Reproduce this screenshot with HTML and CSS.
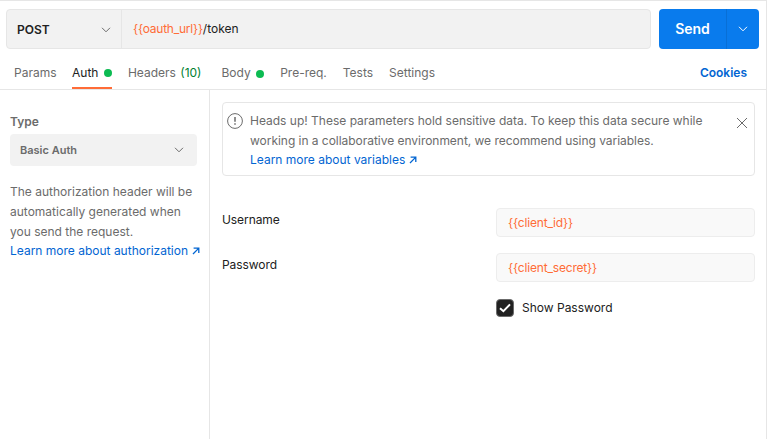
FILE: index.html
```html
<!DOCTYPE html>
<html lang="en">
<head>
<meta charset="utf-8">
<title>Request</title>
<link rel="stylesheet" href="styles.css">
</head>
<body>
<main class="panel">
  <div class="request">
    <div class="urlbar">
      <div class="method">POST
        <svg class="chev" width="10" height="6" viewBox="0 0 10 6"><path d="M1 .8 5 4.8 9 .8"/></svg>
      </div>
      <div class="url"><span class="var">{{oauth_url}}</span>/token</div>
    </div>
    <div class="send">
      <span class="send-label">Send</span>
      <span class="send-more"><svg class="chev" width="10" height="6" viewBox="0 0 10 6"><path d="M1 .8 5 4.8 9 .8"/></svg></span>
    </div>
  </div>
  <nav class="tabs">
    <a class="tab params">Params</a>
    <a class="tab auth active">Auth<i class="dot"></i></a>
    <a class="tab headers">Headers <span class="count">(10)</span></a>
    <a class="tab body">Body<i class="dot"></i></a>
    <a class="tab prereq">Pre-req.</a>
    <a class="tab tests">Tests</a>
    <a class="tab settings">Settings</a>
    <a class="cookies">Cookies</a>
  </nav>
  <div class="content">
    <aside class="side">
      <div class="type">Type</div>
      <div class="select">Basic Auth
        <svg class="chev" width="10" height="6" viewBox="0 0 10 6"><path d="M1 .8 5 4.8 9 .8"/></svg>
      </div>
      <p class="help">The authorization header will be<br>automatically generated when<br>you send the request.</p>
      <a class="link">Learn more about authorization<svg class="ext" width="8" height="8" viewBox="0 0 8 8"><path d="M1.6 1.2H6.8V6M6.6 1.4 1 7"/></svg></a>
    </aside>
    <section class="main">
      <div class="notice">
        <svg class="info" width="16" height="16" viewBox="0 0 16 16"><circle cx="8" cy="8" r="7.4"/><path d="M8 4v4.8M8 10.2v1.6"/></svg>
        <div class="notice-text">
          <p>Heads up! These parameters hold sensitive data. To keep this data secure while</p>
          <p class="second">working in a collaborative environment, we recommend using variables.</p>
          <a class="link">Learn more about variables<svg class="ext" width="8" height="8" viewBox="0 0 8 8"><path d="M1.6 1.2H6.8V6M6.6 1.4 1 7"/></svg></a>
        </div>
        <svg class="close" width="12" height="12" viewBox="0 0 12 12"><path d="M1 1l10 10M11 1 1 11"/></svg>
      </div>
      <div class="field"><span class="label">Username</span><div class="input">{{client_id}}</div></div>
      <div class="field"><span class="label">Password</span><div class="input">{{client_secret}}</div></div>
      <div class="check">
        <span class="box"><svg width="12" height="10" viewBox="0 0 12 10"><path d="M1 5.2 4.4 8.2 11 1.4"/></svg></span>
        Show Password
      </div>
    </section>
  </div>
</main>
</body>
</html>
```
FILE: styles.css
```css
* { box-sizing: border-box; }
body { margin: 0; background: #fff; font: 12px/20px Inter, sans-serif; color: #6b6b6b; }
p { margin: 0; }
svg { fill: none; stroke: #6b6b6b; flex: none; }
.panel { width: 767px; height: 439px; border-top: 1px solid #e6e6e6; border-right: 1px solid #e6e6e6; display: flex; flex-direction: column; }
.request { display: flex; gap: 8px; padding: 8px 7px 0 6px; height: 48px; }
.urlbar { flex: 1; display: flex; background: #f2f2f2; border: 1px solid #e6e6e6; border-radius: 4px; line-height: 38px; }
.method { width: 115px; border-right: 1px solid #e6e6e6; padding: 1px 10px 0; display: flex; align-items: center; justify-content: space-between; color: #212121; font-weight: 600; }
.url { padding-left: 11px; color: #212121; }
.var { color: #ff6c37; letter-spacing: -.22px; }
.send { width: 100px; display: flex; background: #097bed; border-radius: 4px; color: #fff; overflow: hidden; }
.send-label { width: 67px; text-align: center; font-size: 14px; font-weight: 600; line-height: 40px; letter-spacing: -.1px; }
.send-more { flex: 1; border-left: 1px solid #086fd6; display: flex; align-items: center; justify-content: center; }
.send svg { stroke: #fff; }
.tabs { height: 41px; padding: 8px 19px 0 14px; border-bottom: 1px solid #e6e6e6; display: flex; gap: 16px; line-height: 32px; }
.tab { display: flex; align-items: center; white-space: pre; height: 32px; }
.params { margin-right: -.5px; }
.headers { margin-right: 4px; }
.active { color: #212121; border-bottom: 2px solid #ff6c37; line-height: 31px; }
.dot { width: 8px; height: 8px; border-radius: 50%; background: #0cbb52; margin: 1px 0 0 5.5px; }
.count { color: #007f31; margin-left: 1px; }
.cookies { margin-left: auto; color: #0265d2; font-weight: 600; }
.content { flex: 1; display: flex; }
.side { width: 210px; border-right: 1px solid #e6e6e6; padding: 22px 0 0 10px; }
.type { font-weight: 600; }
.select { width: 187px; height: 32px; margin: 2px 0 16px; padding: 0 13px 0 10px; background: #f2f2f2; border-radius: 4px; display: flex; align-items: center; justify-content: space-between; font-size: 11px; font-weight: 600; }
.link { display: flex; align-items: center; color: #0265d2; line-height: 18px; white-space: nowrap; }
.ext { margin-left: 4px; stroke: #0265d2; stroke-width: 1.3; }
.main { flex: 1; padding: 12px 11px 0 12px; }
.notice { height: 74px; border: 1px solid #e6e6e6; border-radius: 4px; display: flex; padding: 8px 6px 0 4px; margin-bottom: 32px; }
.notice-text { margin-left: 7px; flex: 1; }
.second { letter-spacing: -.035px; }
.info { margin-top: 2px; }
.info path { stroke-width: 1.5; }
.close { margin-top: 6px; }
.field { display: flex; justify-content: space-between; margin-bottom: 16px; }
.label { color: #212121; line-height: 24px; letter-spacing: -.08px; }
.input { width: 259px; height: 29px; padding-left: 11px; background: #f9f9f9; border: 1px solid #ededed; border-radius: 4px; color: #ff6c37; line-height: 28px; letter-spacing: -.17px; }
.check { margin-left: 274px; display: flex; align-items: center; gap: 8px; color: #212121; }
.box { width: 18px; height: 18px; margin-top: -1px; border-radius: 4px; background: #212121; border: 1px solid #6b6b6b; display: flex; align-items: center; justify-content: center; }
.box svg { stroke: #fff; stroke-width: 2; }
```
